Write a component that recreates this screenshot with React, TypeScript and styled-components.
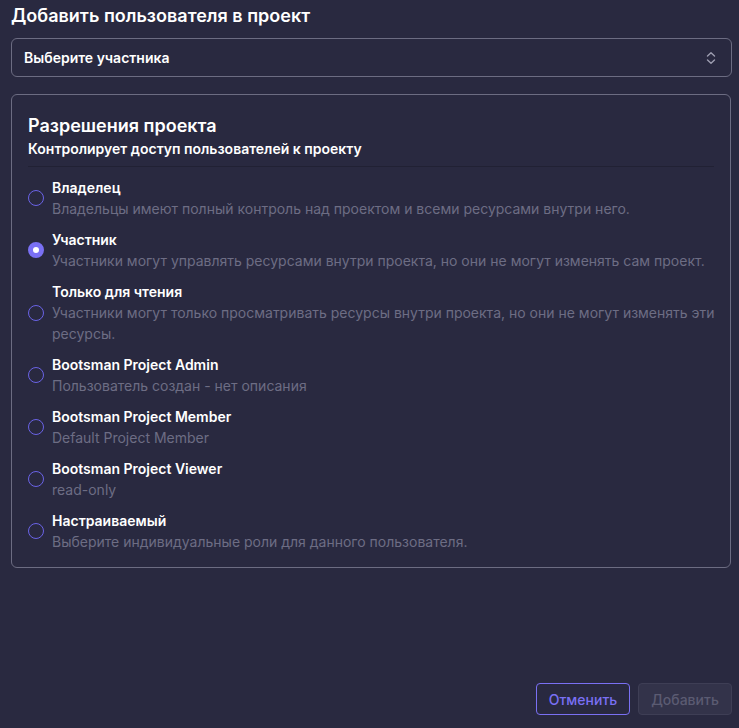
import { useState } from 'react';
import styled, { createGlobalStyle } from 'styled-components';

const COLOR = {
  BG: '#292940',
  BORDER: '#6c6c82',
  DIVIDER: '#212134',
  TEXT: '#ffffff',
  MUTED: '#6d6d84',
  ACCENT: '#7a70f4',
  RADIO_BORDER: '#6a63e6',
};

const GlobalStyle = createGlobalStyle`
  html, body {
    margin: 0;
    padding: 0;
    background: ${COLOR.BG};
  }
  body {
    font-family: Inter, "Noto Sans", sans-serif;
    color: ${COLOR.TEXT};
    -webkit-font-smoothing: antialiased;
  }
`;

const Page = styled.div`
  display: flex;
  flex-direction: column;
  min-height: 728px;
  box-sizing: border-box;
  padding: 4px 7px 13px 11px;
`;

const Heading = styled.h2`
  margin: 0;
  font-size: 18px;
  font-weight: 600;
  line-height: 24px;
`;

const SelectBox = styled.button`
  display: flex;
  align-items: center;
  justify-content: space-between;
  margin-top: 10px;
  height: 39px;
  padding: 0 14px 0 12px;
  background: transparent;
  border: 1px solid ${COLOR.BORDER};
  border-radius: 6px;
  color: ${COLOR.TEXT};
  font-family: inherit;
  font-size: 14px;
  font-weight: 600;
  cursor: pointer;
`;

const Card = styled.section`
  margin-top: 17px;
  margin-right: 1px;
  padding: 19px 16px 15px 16px;
  border: 1px solid ${COLOR.BORDER};
  border-radius: 6px;
`;

const CardTitle = styled.h3`
  margin: 0;
  font-size: 18px;
  font-weight: 600;
  line-height: 24px;
`;

const CardSubtitle = styled.p`
  margin: 1px 0 0;
  font-size: 14px;
  font-weight: 600;
  line-height: 20px;
`;

const Divider = styled.hr`
  margin: 7px 0 0;
  border: 0;
  border-top: 1px solid ${COLOR.DIVIDER};
`;

// descriptions run a little past the divider, nearly to the card edge
const OptionList = styled.div`
  display: flex;
  flex-direction: column;
  gap: 10px;
  padding-top: 10px;
  margin-right: -10px;
`;

const Option = styled.label`
  display: flex;
  align-items: center;
  gap: 8px;
  cursor: pointer;
`;

const Radio = styled.span<{ $checked: boolean }>`
  flex: none;
  box-sizing: border-box;
  width: 16px;
  height: 16px;
  border-radius: 50%;
  border: ${({ $checked }) =>
    $checked ? `5px solid ${COLOR.ACCENT}` : `1.5px solid ${COLOR.RADIO_BORDER}`};
  background: ${({ $checked }) => ($checked ? '#ffffff' : 'transparent')};
`;

const OptionText = styled.div`
  display: flex;
  flex-direction: column;
`;

const OptionTitle = styled.span`
  font-size: 14px;
  font-weight: 600;
  line-height: 21px;
`;

const OptionDesc = styled.span`
  font-size: 14px;
  font-weight: 400;
  line-height: 21px;
  color: ${COLOR.MUTED};
`;

const Footer = styled.div`
  display: flex;
  justify-content: flex-end;
  gap: 8px;
  margin-top: auto;
`;

const Button = styled.button<{ $variant: 'outline' | 'disabled' }>`
  width: 94px;
  height: 32px;
  border-radius: 4px;
  font-family: inherit;
  font-size: 14px;
  font-weight: 500;
  cursor: ${({ $variant }) => ($variant === 'disabled' ? 'default' : 'pointer')};
  background: ${({ $variant }) => ($variant === 'disabled' ? '#33334a' : 'transparent')};
  border: 1px solid ${({ $variant }) => ($variant === 'disabled' ? '#3e3e55' : COLOR.ACCENT)};
  color: ${({ $variant }) => ($variant === 'disabled' ? '#5b5b72' : COLOR.ACCENT)};
`;

const ROLES = [
  {
    id: 'owner',
    title: 'Владелец',
    desc: 'Владельцы имеют полный контроль над проектом и всеми ресурсами внутри него.',
  },
  {
    id: 'member',
    title: 'Участник',
    desc: 'Участники могут управлять ресурсами внутри проекта, но они не могут изменять сам проект.',
  },
  {
    id: 'reader',
    title: 'Только для чтения',
    desc: 'Участники могут только просматривать ресурсы внутри проекта, но они не могут изменять эти ресурсы.',
  },
  {
    id: 'bs-admin',
    title: 'Bootsman Project Admin',
    desc: 'Пользователь создан - нет описания',
  },
  {
    id: 'bs-member',
    title: 'Bootsman Project Member',
    desc: 'Default Project Member',
  },
  {
    id: 'bs-viewer',
    title: 'Bootsman Project Viewer',
    desc: 'read-only',
  },
  {
    id: 'custom',
    title: 'Настраиваемый',
    desc: 'Выберите индивидуальные роли для данного пользователя.',
  },
];

const ChevronUpDown = () => (
  <svg width="12" height="14" viewBox="0 0 12 14" fill="none">
    <path
      d="M2.5 5L6 1.8L9.5 5M2.5 9L6 12.2L9.5 9"
      stroke="#9d9db0"
      strokeWidth="1.4"
      strokeLinecap="round"
      strokeLinejoin="round"
    />
  </svg>
);

export default function App() {
  const [role, setRole] = useState('member');

  return (
    <>
      <GlobalStyle />
      <Page>
        <Heading>Добавить пользователя в проект</Heading>
        <SelectBox type="button">
          <span>Выберите участника</span>
          <ChevronUpDown />
        </SelectBox>

        <Card>
          <CardTitle>Разрешения проекта</CardTitle>
          <CardSubtitle>Контролирует доступ пользователей к проекту</CardSubtitle>
          <Divider />
          <OptionList>
            {ROLES.map((r) => (
              <Option key={r.id} onClick={() => setRole(r.id)}>
                <Radio $checked={role === r.id} />
                <OptionText>
                  <OptionTitle>{r.title}</OptionTitle>
                  <OptionDesc>{r.desc}</OptionDesc>
                </OptionText>
              </Option>
            ))}
          </OptionList>
        </Card>

        <Footer>
          <Button $variant="outline" type="button">
            Отменить
          </Button>
          <Button $variant="disabled" type="button" disabled>
            Добавить
          </Button>
        </Footer>
      </Page>
    </>
  );
}
